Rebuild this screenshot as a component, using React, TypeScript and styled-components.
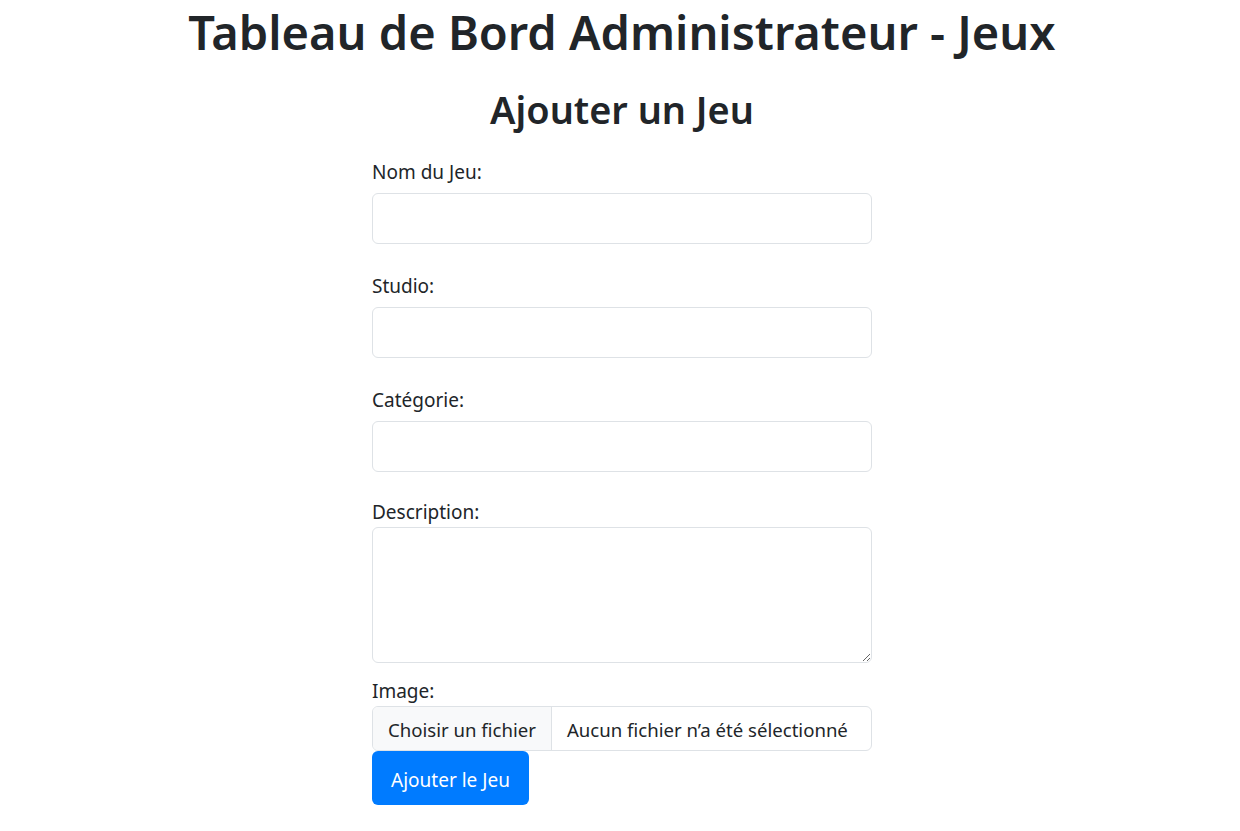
import React from 'react';
import styled, { createGlobalStyle } from 'styled-components';

const GlobalStyle = createGlobalStyle`
    body {
        margin: 0;
        background: #fff;
        color: #212529;
        font-family: "Noto Sans", "Open Sans", "DejaVu Sans", sans-serif;
    }
    * { box-sizing: border-box; }
`;

const Page = styled.div`
    padding-left: 4px;
    display: flex;
    flex-direction: column;
    align-items: center;
`;

const Title = styled.h1`
    margin: 0;
    line-height: 64px;
    font-size: 47px;
    font-weight: 600;
    text-align: center;
`;

const Subtitle = styled.h2`
    margin: 22px 0 0;
    line-height: 46px;
    font-size: 37.9px;
    font-weight: 600;
    text-align: center;
`;

const Form = styled.form`
    width: 500px;
    display: flex;
    flex-direction: column;
    margin-top: 27.5px;
`;

const Field = styled.div<{ $top: number }>`
    display: flex;
    flex-direction: column;
    margin-top: ${p => p.$top}px;
`;

const Label = styled.label<{ $gap: number }>`
    display: block;
    height: 24px;
    line-height: 24px;
    font-size: 19px;
    margin-bottom: ${p => p.$gap}px;
`;

const TextInput = styled.input`
    width: 100%;
    height: 51px;
    padding: 0 15px;
    font: inherit;
    font-size: 19px;
    color: #212529;
    border: 1px solid #dee2e6;
    border-radius: 6px;
    outline: none;
`;

const TextArea = styled.textarea`
    width: 100%;
    height: 136px;
    padding: 8px 15px;
    font: inherit;
    font-size: 19px;
    color: #212529;
    border: 1px solid #dee2e6;
    border-radius: 6px;
    resize: vertical;
    outline: none;
    display: block;
`;

const FileBox = styled.div`
    display: flex;
    height: 45px;
    border: 1px solid #dee2e6;
    border-radius: 6px;
    overflow: hidden;
    font-size: 18.6px;
`;

const FileButton = styled.span`
    display: flex;
    align-items: center;
    flex-shrink: 0;
    padding: 2px 15px 0;
    white-space: nowrap;
    background: #f8f9fa;
    border-right: 1px solid #dee2e6;
`;

const FileName = styled.span`
    display: flex;
    align-items: center;
    padding: 2px 15px 0;
    white-space: nowrap;
`;

const Submit = styled.button`
    align-self: flex-start;
    margin-top: 0.8px;
    height: 54px;
    width: 157px;
    padding: 3px 0 0;
    border: none;
    border-radius: 6px;
    background: #007bff;
    color: #fff;
    font: inherit;
    font-size: 19px;
`;

const fields = [
    { label: 'Nom du Jeu:', top: 0 },
    { label: 'Studio:', top: 30 },
    { label: 'Catégorie:', top: 30 },
];

const App = () => {
    return (
        <>
            <GlobalStyle />
            <Page>
                <Title>Tableau de Bord Administrateur - Jeux</Title>
                <Subtitle>Ajouter un Jeu</Subtitle>
                <Form onSubmit={e => e.preventDefault()}>
                    {fields.map(f => (
                        <Field key={f.label} $top={f.top}>
                            <Label $gap={9}>{f.label}</Label>
                            <TextInput type="text" />
                        </Field>
                    ))}
                    <Field $top={28}>
                        <Label $gap={3}>Description:</Label>
                        <TextArea />
                    </Field>
                    <Field $top={16.5}>
                        <Label $gap={2.5}>Image:</Label>
                        <FileBox>
                            <FileButton>Choisir un fichier</FileButton>
                            <FileName>Aucun fichier n’a été sélectionné</FileName>
                        </FileBox>
                    </Field>
                    <Submit type="submit">Ajouter le Jeu</Submit>
                </Form>
            </Page>
        </>
    );
};

export default App;
